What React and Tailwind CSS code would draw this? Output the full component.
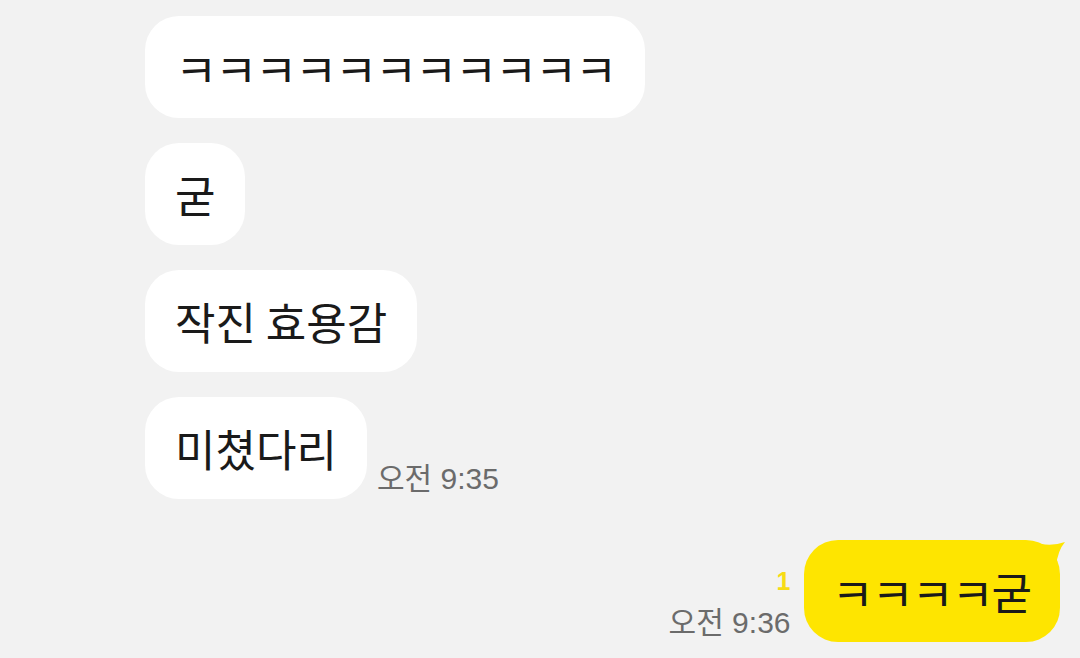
import React from 'react';

const font = { fontFamily: '"Noto Sans CJK KR", "Noto Sans", sans-serif' };
const timeFont = { fontFamily: '"Liberation Sans", "Noto Sans CJK KR", sans-serif' };

const Bubble = ({ children, yellow }) => (
  <div
    className={
      'h-[102px] rounded-[34px] flex items-center text-[44px] text-[#1a1a1a] ' +
      (yellow ? 'bg-[#fee500] px-[28px]' : 'bg-white px-[30px]')
    }
  >
    <span className="leading-none flex items-center">{children}</span>
  </div>
);

const K = () => (
  <span className="inline-block w-[40px] text-center text-[46px] leading-none">ㅋ</span>
);

const Ks = ({ n }) => Array.from({ length: n }).map((_, i) => <K key={i} />);

const App = () => {
  return (
    <div className="w-[1080px] h-[658px] overflow-hidden bg-[#f2f2f2]" style={font}>
      <div className="pl-[145px] pt-[16px] flex flex-col gap-[25px]">
        <div className="flex">
          <Bubble><Ks n={11} /></Bubble>
        </div>
        <div className="flex">
          <Bubble>굳</Bubble>
        </div>
        <div className="flex">
          <Bubble>작진 효용감</Bubble>
        </div>
        <div className="flex items-end">
          <Bubble>미쳤다리</Bubble>
          <div className="ml-[10px] mb-[5px] text-[30px] leading-none text-[#6b6b6b]" style={timeFont}>
            오전 9:35
          </div>
        </div>
      </div>
      <div className="mt-[41px] pr-[20px] flex justify-end items-end">
        <div className="mr-[13px] mb-[4px] flex flex-col items-end">
          <span className="text-[25px] font-bold leading-none text-[#f7dc14] mb-[14px]" style={timeFont}>1</span>
          <span className="text-[30px] leading-none text-[#6b6b6b]" style={timeFont}>오전 9:36</span>
        </div>
        <div className="relative">
          <Bubble yellow>
            <Ks n={4} />
            <span>굳</span>
          </Bubble>
          <svg className="absolute -right-[8px] top-0" width="40" height="30" viewBox="0 0 40 30">
            <path d="M4 1 Q20 8 37 2 Q30 10 28 26 L4 26 Z" fill="#fee500" />
          </svg>
        </div>
      </div>
    </div>
  );
};

export default App;
